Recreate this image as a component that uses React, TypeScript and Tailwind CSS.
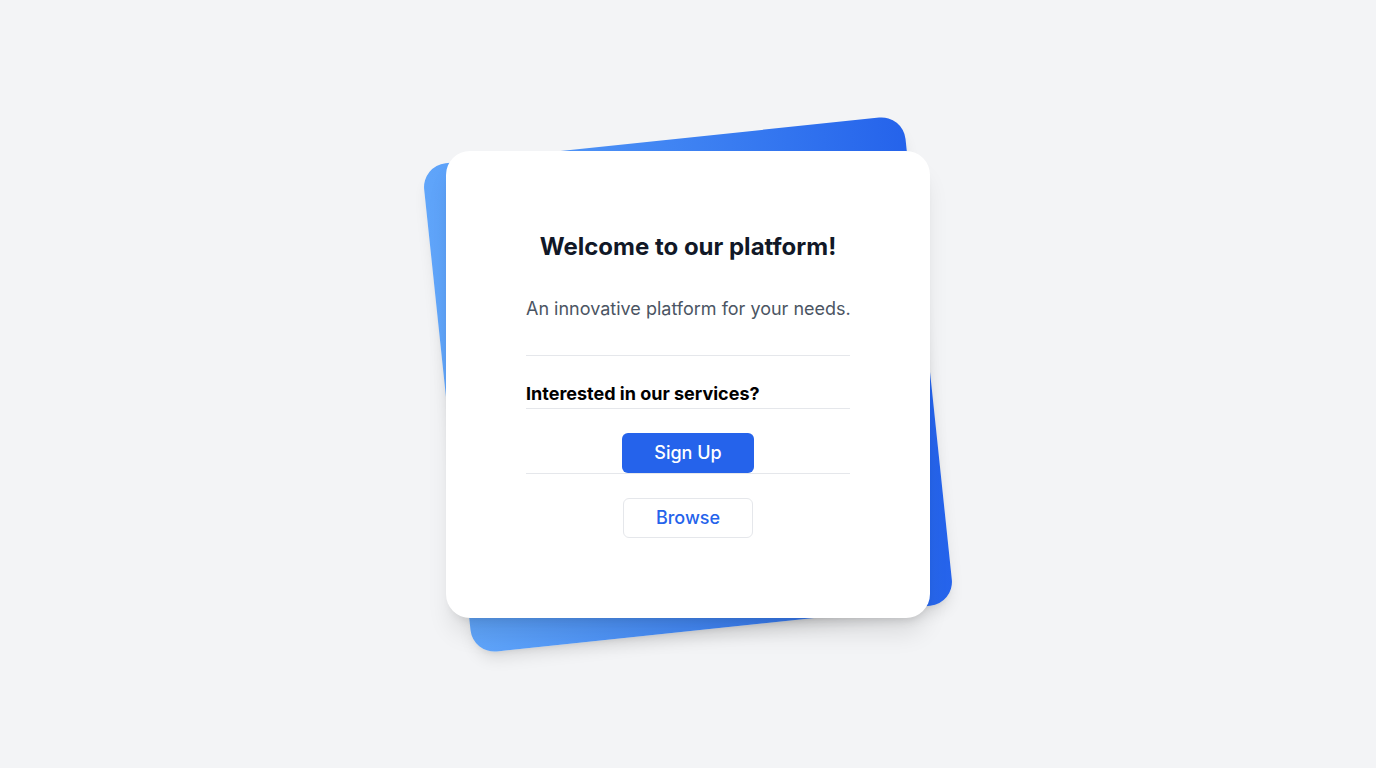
import React from "react";

export default function App() {
  return (
    <div
      className="min-h-screen w-full bg-[#f3f4f6] flex items-center justify-center"
      style={{ fontFamily: "Inter, 'Noto Sans', sans-serif" }}
    >
      <div className="relative w-[484px]">
        <div className="absolute inset-x-0 -inset-y-3 -rotate-6 rounded-3xl bg-gradient-to-r from-[#60a5fa] to-[#2563eb] shadow-lg" />
        <div className="relative rounded-3xl bg-white shadow-xl p-20 flex flex-col">
          <h1 className="text-2xl leading-8 font-bold text-[#111827] text-center">
            Welcome to our platform!
          </h1>
          <p className="mt-8 text-lg leading-7 text-[#4b5563] text-center whitespace-nowrap">
            An innovative platform for your needs.
          </p>
          <div className="mt-8 border-t border-[#e5e7eb]" />
          <h3 className="mt-6 text-lg leading-7 font-bold text-black border-b border-[#e5e7eb]">
            Interested in our services?
          </h3>
          <div className="mt-6 flex justify-center border-b border-[#e5e7eb]">
            <button className="h-10 w-[132px] rounded-md bg-[#2563eb] text-white text-lg font-medium">
              Sign Up
            </button>
          </div>
          <div className="mt-6 flex justify-center">
            <button className="h-10 w-[130px] rounded-md bg-white text-[#2563eb] text-lg font-medium border border-[#e5e7eb]">
              Browse
            </button>
          </div>
        </div>
      </div>
    </div>
  );
}
